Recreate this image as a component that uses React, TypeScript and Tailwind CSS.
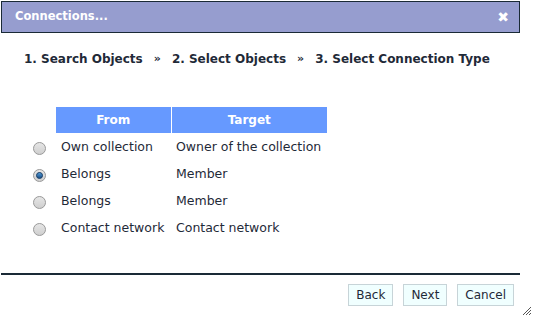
import React, { useState } from 'react';

const rows = [
  { from: 'Own collection', target: 'Owner of the collection' },
  { from: 'Belongs', target: 'Member' },
  { from: 'Belongs', target: 'Member' },
  { from: 'Contact network', target: 'Contact network' },
];

function Radio({ checked, onClick }: { checked: boolean; onClick: () => void }) {
  return (
    <span
      onClick={onClick}
      className="inline-flex items-center justify-center w-[13px] h-[13px] rounded-full border border-[#9a9a9a] bg-gradient-to-b from-[#e6e6e6] to-[#cfcfcf] cursor-pointer"
    >
      {checked && (
        <span className="block w-[7px] h-[7px] rounded-full bg-gradient-to-b from-[#4f9ad8] to-[#1c4f86] border border-[#1d3f66]" />
      )}
    </span>
  );
}

export default function App() {
  const [selected, setSelected] = useState(1);

  return (
    <div
      className="w-[534px] h-[319px] bg-white relative overflow-hidden text-[#333]"
      style={{ fontFamily: '"DejaVu Sans", Verdana, sans-serif' }}
    >
      <div className="ml-px mt-px w-[519px] h-[32px] border border-[#1a2a36] bg-[#969dcf] flex items-center justify-between pl-[13px] pr-[10px]">
        <span className="text-white font-bold text-[11.5px]">Connections...</span>
        <span className="text-white font-bold text-[14px] leading-none">✖</span>
      </div>

      <div className="pl-[24px] pt-[17px] flex items-center text-[12px] font-bold text-[#1f2a38]">
        <span>1. Search Objects</span>
        <span className="px-[11px] text-[11px]">»</span>
        <span>2. Select Objects</span>
        <span className="px-[11px] text-[11px]">»</span>
        <span>3. Select Connection Type</span>
      </div>

      <table className="ml-[33px] mt-[39px] border-collapse text-[12.5px] text-[#1f2a38]">
        <thead>
          <tr className="h-[26px] text-[12px]">
            <th className="w-[23px] p-0" />
            <th className="w-[115px] bg-[#6699ff] text-white font-bold text-center border-r border-white p-0">From</th>
            <th className="w-[156px] bg-[#6699ff] text-white font-bold text-center p-0">Target</th>
          </tr>
        </thead>
        <tbody>
          {rows.map((r, i) => (
            <tr key={i} className="h-[27px]">
              <td className="p-0 pt-[2px] align-middle">
                <div className="flex items-center pt-[2px]">
                  <Radio checked={selected === i} onClick={() => setSelected(i)} />
                </div>
              </td>
              <td className="p-0 pt-[2px] pl-[5px] whitespace-nowrap">{r.from}</td>
              <td className="p-0 pt-[2px] pl-[5px] whitespace-nowrap">{r.target}</td>
            </tr>
          ))}
        </tbody>
      </table>

      <div className="absolute left-px top-[273px] w-[519px] h-[2px] bg-[#1a2a36]" />

      <div className="absolute top-[284px] right-[20px] flex gap-[10px] text-[12px] text-[#1f2a38]">
        <button className="h-[22px] px-[7px] bg-[#f0ffff] border border-[#c7d4d8]">Back</button>
        <button className="h-[22px] px-[7px] bg-[#f0ffff] border border-[#c7d4d8]">Next</button>
        <button className="h-[22px] px-[7px] bg-[#f0ffff] border border-[#c7d4d8]">Cancel</button>
      </div>

      <svg className="absolute left-[522px] top-[306px]" width="10" height="10" viewBox="0 0 10 10">
        <path d="M1 9 L9 1 M4 9 L9 4 M7 9 L9 7" stroke="#555" strokeWidth="1" />
      </svg>
    </div>
  );
}
